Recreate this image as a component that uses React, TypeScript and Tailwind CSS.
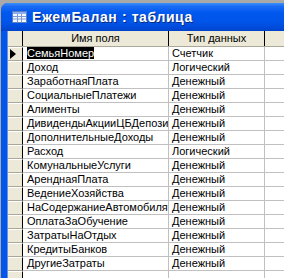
import React from "react";

const rows: [string, string][] = [
  ["СемьяНомер", "Счетчик"],
  ["Доход", "Логический"],
  ["ЗаработнаяПлата", "Денежный"],
  ["СоциальныеПлатежи", "Денежный"],
  ["Алименты", "Денежный"],
  ["ДивидендыАкцииЦБДепозиты", "Денежный"],
  ["ДополнительныеДоходы", "Денежный"],
  ["Расход", "Логический"],
  ["КомунальныеУслуги", "Денежный"],
  ["АренднаяПлата", "Денежный"],
  ["ВедениеХозяйства", "Денежный"],
  ["НаСодержаниеАвтомобиля", "Денежный"],
  ["ОплатаЗаОбучение", "Денежный"],
  ["ЗатратыНаОтдых", "Денежный"],
  ["КредитыБанков", "Денежный"],
  ["ДругиеЗатраты", "Денежный"],
];

function TableIcon() {
  return (
    <svg width="15" height="12" viewBox="0 0 15 12" className="shrink-0">
      <rect x="0.5" y="0.5" width="14" height="11" fill="#f4f8ff" stroke="#5c7fc4" />
      <rect x="1" y="1" width="13" height="2" fill="#8db0ec" />
      <path d="M1 5.5H14M1 8H14M5.5 3V11.5M9.5 3V11.5" stroke="#7d9ad4" strokeWidth="1" />
    </svg>
  );
}

export default function App() {
  return (
    <div
      className="w-[284px] h-[278px] overflow-hidden bg-[#a9a9a9] pt-[3px] pl-[1px]"
      style={{ fontFamily: '"Liberation Sans", Arial, sans-serif' }}
    >
      <div className="w-[300px] h-[300px] rounded-tl-[7px] overflow-hidden flex flex-col bg-[#0055ea]">
        {/* title bar */}
        <div className="h-[28px] flex items-center gap-[5px] pl-[11px] bg-[linear-gradient(to_bottom,#3c8ff9_0%,#1a6cf5_12%,#0058ee_35%,#0054e8_70%,#0049d8_90%,#0042c8_100%)]">
          <TableIcon />
          <span className="text-white font-bold text-[14px] leading-none [text-shadow:1px_1px_0_#0a2a7a] tracking-[0.6px]">
            ЕжемБалан : таблица
          </span>
        </div>
        {/* body */}
        <div className="flex-1 flex pl-[6px]">
          <div className="flex-1 bg-white border-l border-[#6d8fe0] text-[11px] leading-[13px] text-black">
            {/* header */}
            <div className="flex h-[16px] bg-[#ece9d8] border-b border-[#aca899]">
              <div className="w-[15px] shrink-0 border-r border-black" />
              <div className="w-[146px] shrink-0 border-r border-black text-center leading-[15px]">
                Имя поля
              </div>
              <div className="w-[96px] shrink-0 border-r border-black text-center leading-[15px]">
                Тип данных
              </div>
              <div className="flex-1" />
            </div>
            {rows.map(([name, type], i) => (
              <div key={name} className="flex h-[14px]">
                <div className="w-[15px] shrink-0 bg-[#ece9d8] border-r border-black border-b border-b-[#aca899] border-t border-t-white flex items-center pl-[2px]">
                  {i === 0 && (
                    <svg width="6" height="10" viewBox="0 0 6 10">
                      <path d="M0 0L6 5L0 10Z" fill="#000" />
                    </svg>
                  )}
                </div>
                <div className="w-[146px] shrink-0 border-r border-b border-[#c0c0c0] pl-[4px] overflow-hidden whitespace-nowrap">
                  {i === 0 ? <span className="bg-black text-white">{name}</span> : name}
                </div>
                <div className="w-[96px] shrink-0 border-r border-b border-[#c0c0c0] pl-[3px] overflow-hidden whitespace-nowrap">
                  {type}
                </div>
                <div className="flex-1 border-b border-[#c0c0c0]" />
              </div>
            ))}
            <div className="flex h-[14px]">
              <div className="w-[15px] shrink-0 bg-[#ece9d8] border-r border-black border-t border-t-white" />
              <div className="w-[146px] shrink-0 border-r border-[#c0c0c0]" />
              <div className="w-[96px] shrink-0 border-r border-[#c0c0c0]" />
            </div>
          </div>
        </div>
      </div>
    </div>
  );
}
